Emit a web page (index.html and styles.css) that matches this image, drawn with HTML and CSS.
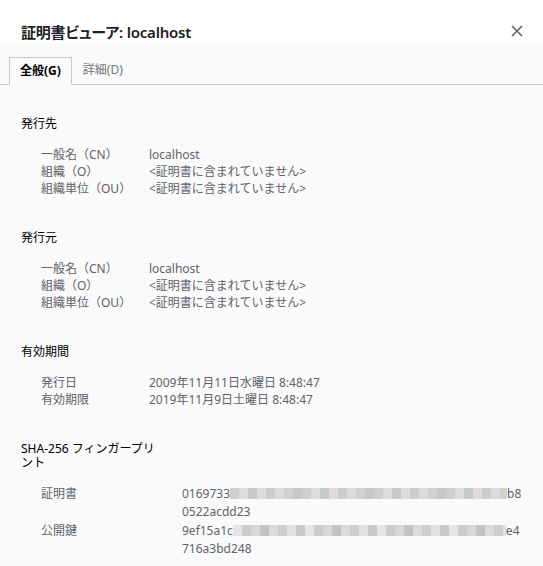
FILE: index.html
```html
<!DOCTYPE html>
<html lang="ja">
<head>
    <meta charset="UTF-8">
    <title>証明書ビューア: localhost</title>
    <link rel="stylesheet" href="styles.css">
</head>
<body>

<div class="viewer">
    <div class="header">
        <h1>証明書ビューア: localhost</h1>
        <button class="close" aria-label="閉じる">
            <svg width="12" height="12" viewBox="0 0 12 12"><path d="M1 1L11 11M11 1L1 11" stroke="#5f6368" stroke-width="1.6" fill="none"/></svg>
        </button>
    </div>

    <div class="tabs">
        <div class="tab active">全般(G)</div>
        <div class="tab">詳細(D)</div>
    </div>

    <div class="content">
        <div class="section">
            <h2>発行先</h2>
            <div class="row"><span class="label">一般名（CN）</span><span class="value">localhost</span></div>
            <div class="row"><span class="label">組織（O）</span><span class="value">&lt;証明書に含まれていません&gt;</span></div>
            <div class="row"><span class="label">組織単位（OU）</span><span class="value">&lt;証明書に含まれていません&gt;</span></div>
        </div>

        <div class="section">
            <h2>発行元</h2>
            <div class="row"><span class="label">一般名（CN）</span><span class="value">localhost</span></div>
            <div class="row"><span class="label">組織（O）</span><span class="value">&lt;証明書に含まれていません&gt;</span></div>
            <div class="row"><span class="label">組織単位（OU）</span><span class="value">&lt;証明書に含まれていません&gt;</span></div>
        </div>

        <div class="section">
            <h2>有効期間</h2>
            <div class="row"><span class="label">発行日</span><span class="value">2009年11月11日水曜日 8:48:47</span></div>
            <div class="row"><span class="label">有効期限</span><span class="value">2019年11月9日土曜日 8:48:47</span></div>
        </div>

        <div class="section fingerprints">
            <h2>SHA-256 フィンガープリント</h2>
            <div class="row">
                <span class="label">証明書</span>
                <span class="value">0169733<span class="blur"></span>b8<br>0522acdd23</span>
            </div>
            <div class="row">
                <span class="label">公開鍵</span>
                <span class="value">9ef15a1c<span class="blur alt"></span>e4<br>716a3bd248</span>
            </div>
        </div>
    </div>
</div>

</body>
</html>
```

FILE: styles.css
```css
body {
    margin: 0;
    font-family: "Noto Sans", "Noto Sans CJK JP", sans-serif;
    background-color: #fafafa;
    color: #202124;
}

.viewer {
    width: 543px;
    height: 566px;
    overflow: hidden;
}

/* ヘッダー */
.header {
    display: flex;
    align-items: center;
    justify-content: space-between;
    height: 43px;
    padding: 19px 20px 0 21px;
    background-color: #fff;
    box-sizing: border-box;
}
.header h1 {
    margin: 0;
    font-size: 15px;
    font-weight: 600;
    font-feature-settings: "palt";
    letter-spacing: -0.2px;
}
.close {
    border: none;
    background: none;
    padding: 0;
    width: 12px;
    height: 12px;
    display: flex;
    cursor: pointer;
}

/* タブ */
.tabs {
    display: flex;
    margin-top: 14px;
    padding-left: 9px;
    border-bottom: 1px solid #c8c8c8;
    height: 27px;
}
.tab {
    font-size: 12px;
    line-height: 26px;
    padding: 0 11px;
    color: #70757a;
    margin-bottom: -1px;
}
.tab.active {
    color: #000;
    font-weight: 700;
    border: 1px solid #c8c8c8;
    border-bottom: 1px solid #fafafa;
    padding: 0 10px;
    background-color: #fafafa;
}

/* 内容 */
.content {
    padding: 32px 0 0 21px;
}
.section {
    margin-bottom: 34px;
}
.section h2 {
    margin: 0 0 15px;
    font-size: 12px;
    font-weight: 400;
    line-height: 14px;
    color: #000;
    width: 140px;
}
.row {
    display: flex;
    font-size: 12px;
    line-height: 17px;
    color: #5f6368;
    padding-left: 20px;
}
.label {
    width: 108px;
    flex-shrink: 0;
}
.fingerprints .row {
    line-height: 18px;
    margin-bottom: 0.5px;
}
.fingerprints .label {
    width: 141px;
}

.blur {
    display: inline-block;
    vertical-align: -1px;
    width: 277px;
    height: 11px;
    background: repeating-linear-gradient(90deg,
        #c9c9c9 0 9px, #d8d8d8 9px 18px, #c2c5c6 18px 27px,
        #dcd9d6 27px 36px, #c7c7c7 36px 45px, #d5d7db 45px 54px,
        #cfcdcb 54px 63px, #bfc2c4 63px 72px);
    opacity: 0.9;
}
.blur.alt {
    width: 273px;
    background: repeating-linear-gradient(90deg,
        #e3e3e3 0 9px, #c8c8c8 9px 18px, #d4d4d4 18px 27px,
        #bdbdbd 27px 36px, #d8d9dc 36px 45px, #cac8c6 45px 54px,
        #dedede 54px 63px, #c4c4c4 63px 72px);
}
```
